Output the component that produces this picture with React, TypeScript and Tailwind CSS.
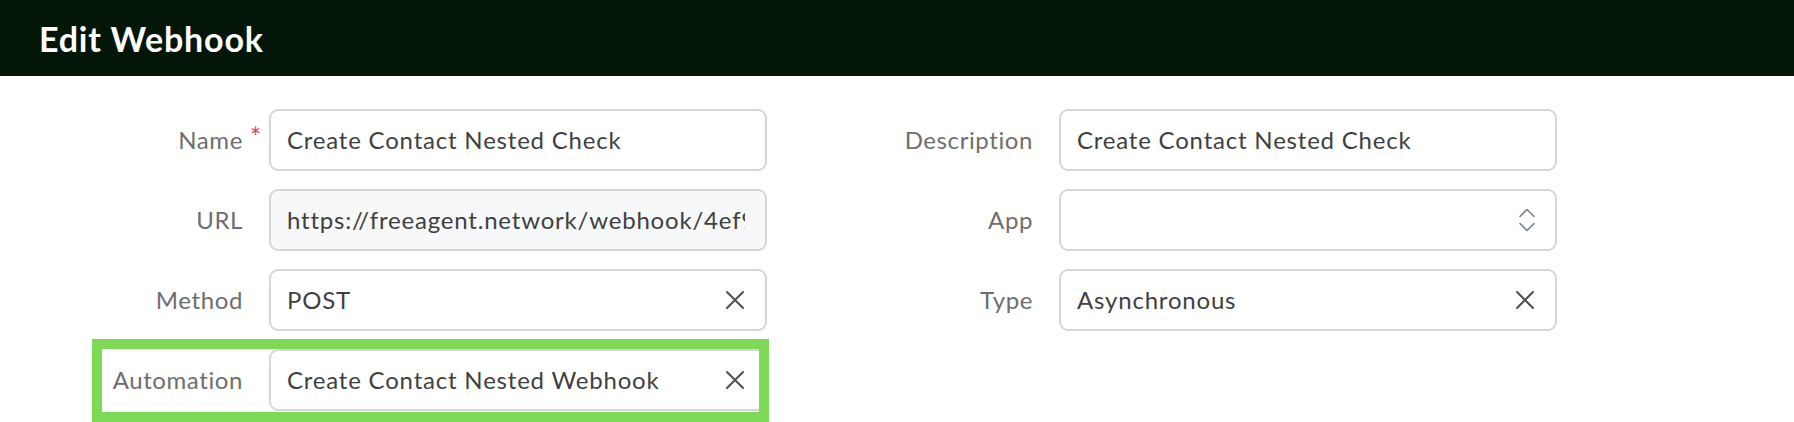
import React from 'react';

const font = { fontFamily: 'Lato, "Noto Sans", sans-serif' };

function ClearIcon() {
  return (
    <svg width="20" height="20" viewBox="0 0 20 20" fill="none" stroke="#4b5057" strokeWidth="2" strokeLinecap="round">
      <path d="M2 2 L18 18 M18 2 L2 18" />
    </svg>
  );
}

function UpDownIcon() {
  return (
    <svg width="16" height="24" viewBox="0 0 16 24" fill="none" stroke="#7a808a" strokeWidth="1.6" strokeLinecap="round" strokeLinejoin="round">
      <path d="M1 8.5 L8 1.5 L15 8.5" />
      <path d="M1 15.5 L8 22.5 L15 15.5" />
    </svg>
  );
}

function Field({
  label,
  value,
  required,
  clearable,
  select,
  muted,
}: {
  label: string;
  value?: string;
  required?: boolean;
  clearable?: boolean;
  select?: boolean;
  muted?: boolean;
}) {
  return (
    <div className="flex items-center h-[62px]">
      <div className="relative w-[243px] text-right text-[24px] tracking-[0.6px] text-[#6e6e6e]">
        {label}
        {required && (
          <span className="absolute left-[250px] -top-[4px] text-[26px] text-[#e8395d]">*</span>
        )}
      </div>
      <div
        className={`ml-[26px] w-[498px] h-[62px] flex items-center pl-4 pr-[20px] border-2 border-[#d3d6dc] rounded-[9px] ${
          muted ? 'bg-[#f7f8fa]' : 'bg-white'
        }`}
      >
        <div className="flex-1 overflow-hidden whitespace-nowrap text-[24px] tracking-[0.8px] text-[#3f3f3f]">
          {value}
        </div>
        {clearable && <ClearIcon />}
        {select && <UpDownIcon />}
      </div>
    </div>
  );
}

export default function App() {
  return (
    <div className="w-[1794px] h-[422px] bg-white overflow-hidden" style={font}>
      {/* header */}
      <div className="h-[76px] bg-[#031608] flex items-center pl-[39px]">
        <h1 className="text-[34px] font-bold tracking-[0.8px] text-white">Edit Webhook</h1>
      </div>

      <div className="grid grid-cols-[790px_790px] pt-[33px]">
        <div className="flex flex-col gap-[18px]">
          <Field label="Name" required value="Create Contact Nested Check" />
          <Field label="URL" muted value="https://freeagent.network/webhook/4ef94c1b-8d2e-4a7f" />
          <Field label="Method" clearable value="POST" />
          <div className="relative">
            <Field label="Automation" clearable value="Create Contact Nested Webhook" />
            {/* highlight box */}
            <div className="absolute left-[92px] -top-[10px] w-[677px] h-[83px] border-[10px] border-[#7ed957]" />
          </div>
        </div>
        <div className="flex flex-col gap-[18px]">
          <Field label="Description" value="Create Contact Nested Check" />
          <Field label="App" select />
          <Field label="Type" clearable value="Asynchronous" />
        </div>
      </div>
    </div>
  );
}
